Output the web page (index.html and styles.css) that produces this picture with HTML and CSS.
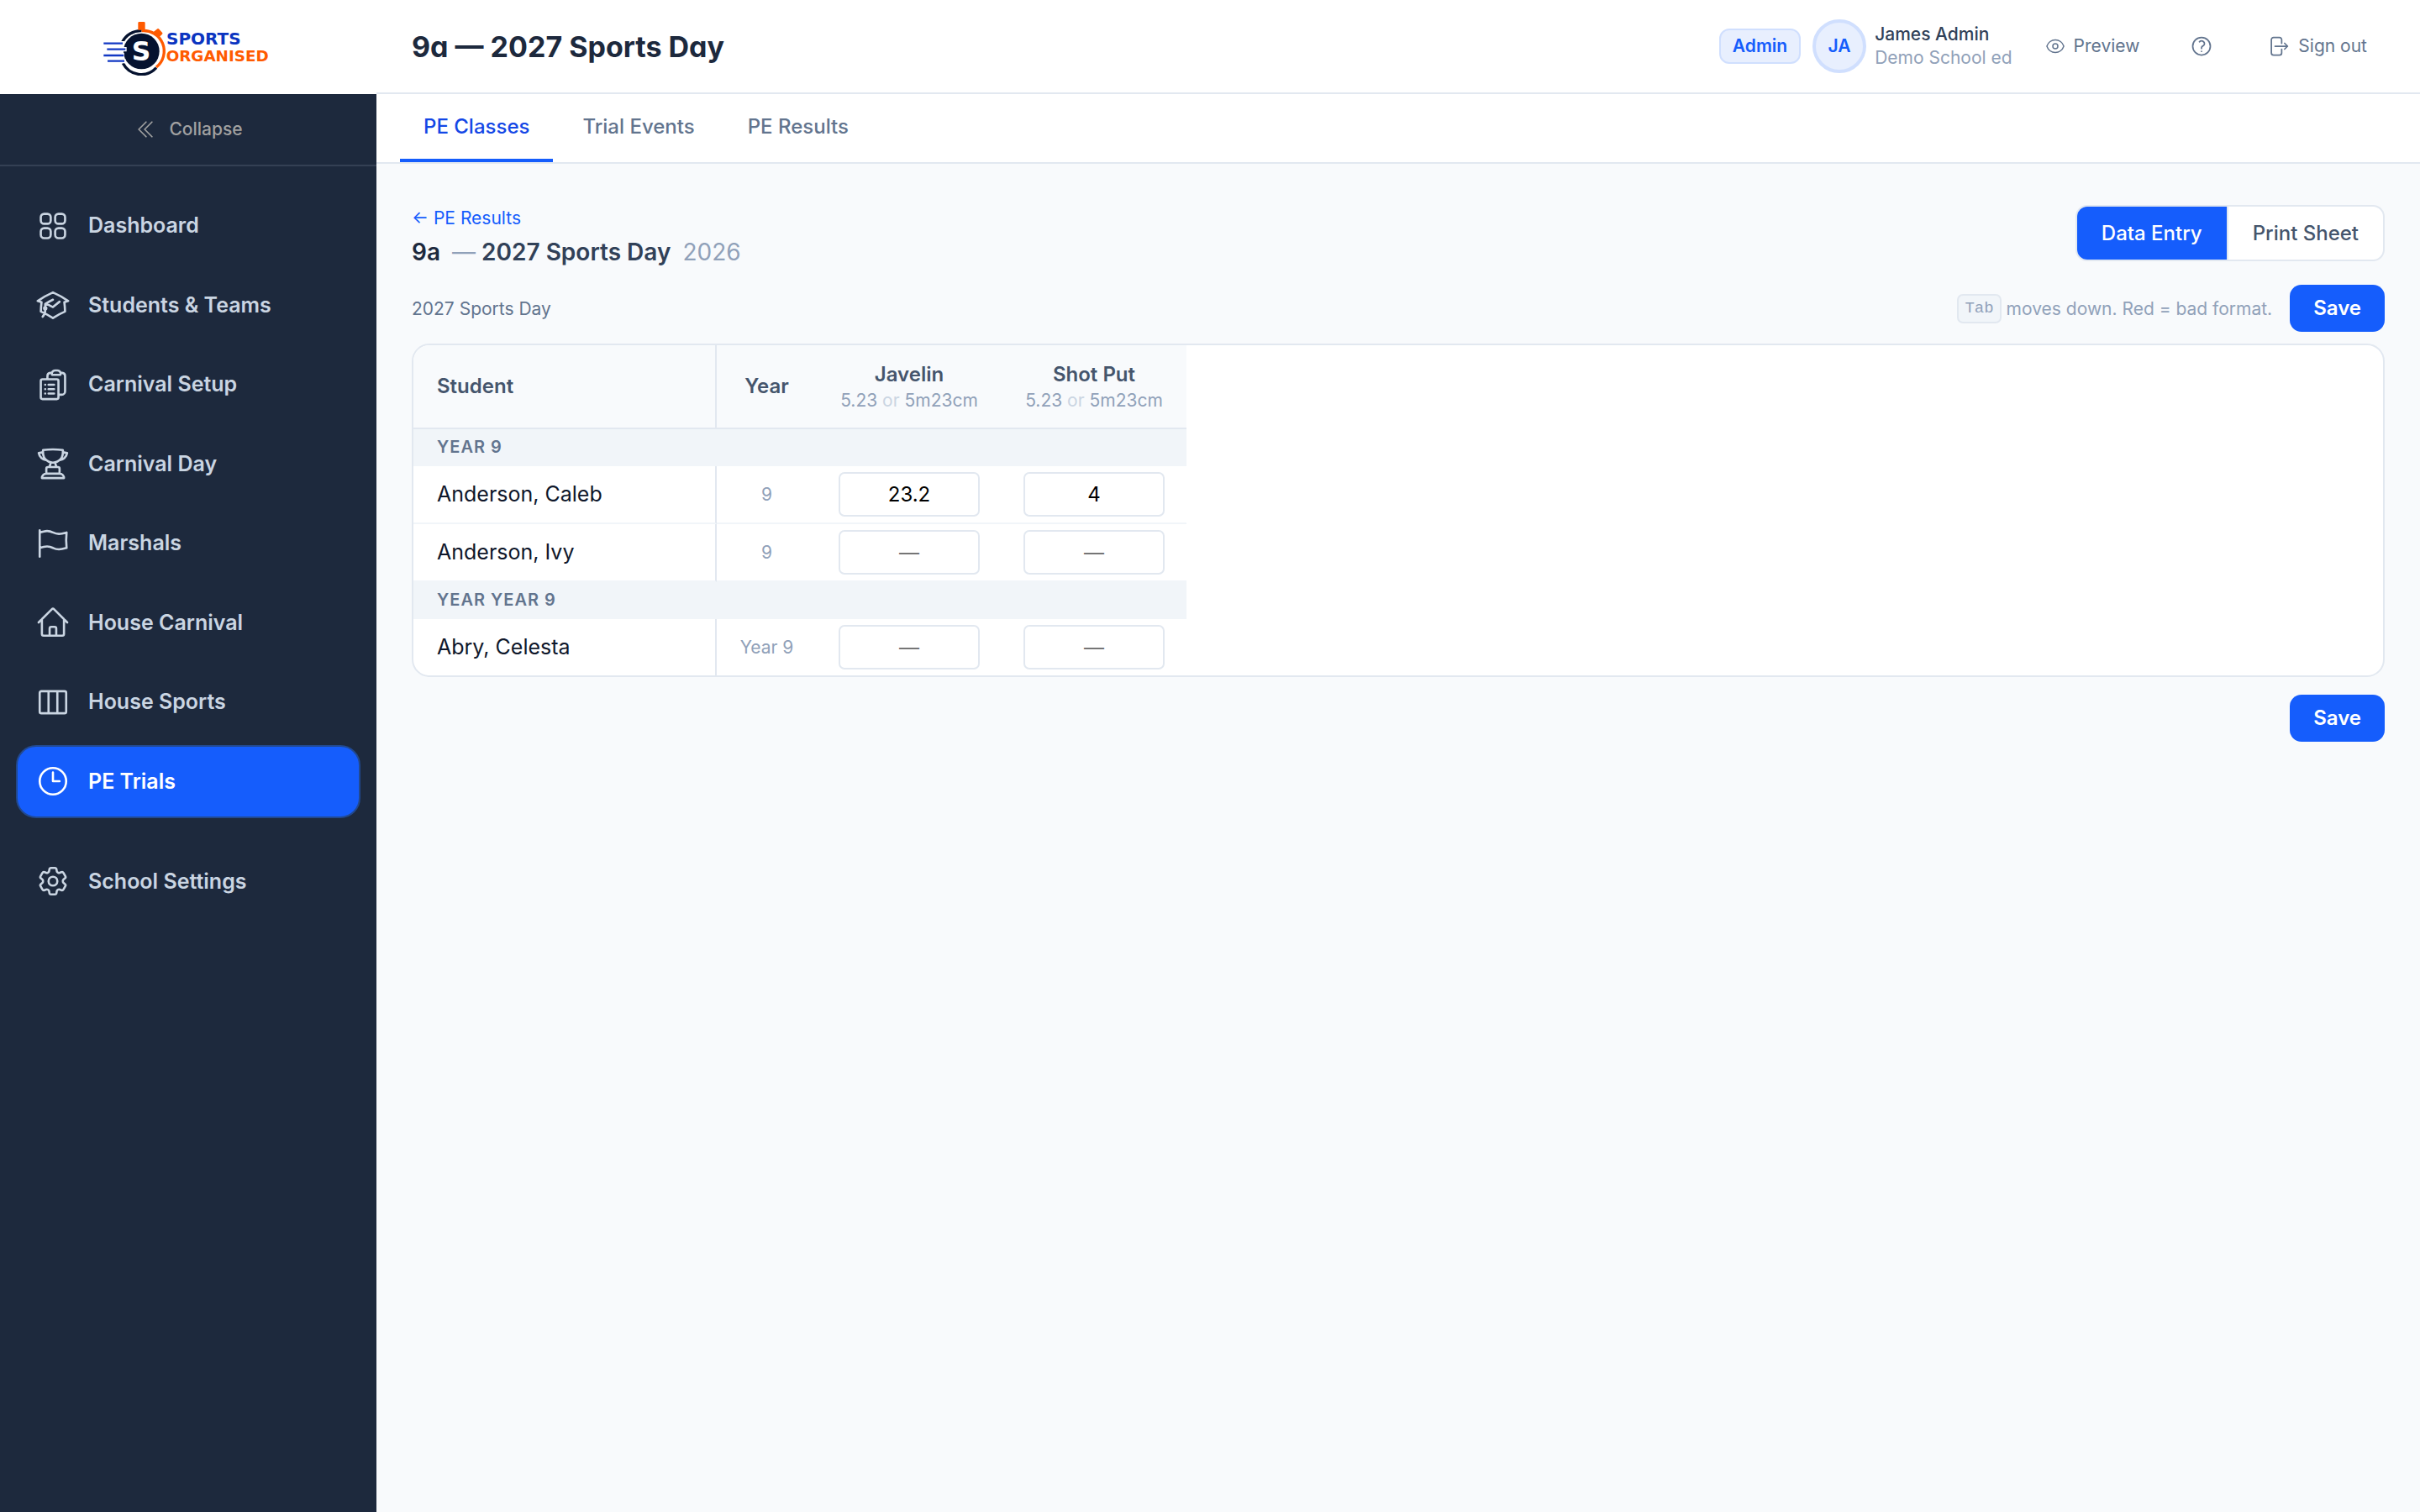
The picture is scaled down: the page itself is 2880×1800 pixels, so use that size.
FILE: index.html
```html
<!DOCTYPE html>
<html lang="en">
<head>
    <meta charset="UTF-8">
    <meta name="viewport" content="width=device-width, initial-scale=1.0">
    <title>9a — 2027 Sports Day</title>
    <link rel="stylesheet" href="styles.css">
</head>
<body>
    <aside class="sidebar">
        <a class="logo" href="#" aria-label="Sports Organised">
            <svg viewBox="66 36 612 204">
                <path d="M258 210A73 73 0 0 0 205 80" fill="none" stroke="#ff5a00" stroke-width="10"/>
                <path d="M205 80A73 73 0 0 0 137 120M139 196A73 73 0 0 0 258 212" fill="none" stroke="#05122f" stroke-width="10"/>
                <path d="M193 52q0-4 4-4h17q4 0 4 4v28l-13-3h-12z" fill="#ff5a00"/>
                <path d="M248 84l14-11q3-2 6 1l11 12q3 3 0 6l-10 10z" fill="#ff5a00"/>
                <circle cx="205" cy="153" r="64" fill="#05122f"/>
                <path d="M130 125h14M130 146h22M130 168h14M130 188h18" stroke="#fff" stroke-width="16"/>
                <path d="M70 125h68M82 146h66M70 168h72M84 188h60" stroke="#1238c4" stroke-width="7"/>
                <text x="170" y="187" class="logo-s">S</text>
                <text x="294" y="129" class="logo-top">SPORTS</text>
                <text x="293" y="189" class="logo-bottom">ORGANISED</text>
            </svg>
        </a>
        <button class="collapse" type="button">
            <svg class="icon" viewBox="0 0 24 24"><path d="m18.75 4.5-7.5 7.5 7.5 7.5m-6-15L5.25 12l7.5 7.5"/></svg>
            Collapse
        </button>
        <nav class="side-nav">
            <ul class="menu menu-main">
                <li><a href="#">
                    <svg class="icon" viewBox="0 0 24 24"><path d="M3.75 6A2.25 2.25 0 0 1 6 3.75h2.25A2.25 2.25 0 0 1 10.5 6v2.25a2.25 2.25 0 0 1-2.25 2.25H6a2.25 2.25 0 0 1-2.25-2.25V6ZM3.75 15.75A2.25 2.25 0 0 1 6 13.5h2.25a2.25 2.25 0 0 1 2.25 2.25V18a2.25 2.25 0 0 1-2.25 2.25H6A2.25 2.25 0 0 1 3.75 18v-2.25ZM13.5 6a2.25 2.25 0 0 1 2.25-2.25H18A2.25 2.25 0 0 1 20.25 6v2.25A2.25 2.25 0 0 1 18 10.5h-2.25a2.25 2.25 0 0 1-2.25-2.25V6ZM13.5 15.75a2.25 2.25 0 0 1 2.25-2.25H18a2.25 2.25 0 0 1 2.25 2.25V18A2.25 2.25 0 0 1 18 20.25h-2.25A2.25 2.25 0 0 1 13.5 18v-2.25Z"/></svg>
                    Dashboard
                </a></li>
                <li><a href="#">
                    <svg class="icon" viewBox="0 0 24 24"><path d="M4.26 10.147a60.438 60.438 0 0 0-.491 6.347A48.62 48.62 0 0 1 12 20.904a48.62 48.62 0 0 1 8.232-4.41 60.46 60.46 0 0 0-.491-6.347m-15.482 0a50.636 50.636 0 0 0-2.658-.813A59.906 59.906 0 0 1 12 3.493a59.903 59.903 0 0 1 10.399 5.84c-.896.248-1.783.52-2.658.814M7.5 11.25 12 13.489l4.5-3.7M6.75 15a.75.75 0 1 0 0-1.5.75.75 0 0 0 0 1.5Zm0 0v-3.675A55.378 55.378 0 0 1 12 8.443m-7.007 11.55A5.981 5.981 0 0 0 6.75 15.75v-1.5"/></svg>
                    Students &amp; Teams
                </a></li>
                <li><a href="#">
                    <svg class="icon" viewBox="0 0 24 24"><path d="M9 12h3.75M9 15h3.75M9 18h3.75m3 .75H18a2.25 2.25 0 0 0 2.25-2.25V6.108c0-1.135-.845-2.098-1.976-2.192a48.424 48.424 0 0 0-1.123-.08m-5.801 0c-.065.21-.1.433-.1.664 0 .414.336.75.75.75h4.5a.75.75 0 0 0 .75-.75 2.25 2.25 0 0 0-.1-.664m-5.8 0A2.251 2.251 0 0 1 13.5 2.25H15c1.012 0 1.867.668 2.15 1.586m-5.8 0c-.376.023-.75.05-1.124.08C9.095 4.01 8.25 4.973 8.25 6.108V8.25m0 0H4.875c-.621 0-1.125.504-1.125 1.125v11.25c0 .621.504 1.125 1.125 1.125h9.75c.621 0 1.125-.504 1.125-1.125V9.375c0-.621-.504-1.125-1.125-1.125H8.25ZM6.75 12h.008v.008H6.75V12Zm0 3h.008v.008H6.75V15Zm0 3h.008v.008H6.75V18Z"/></svg>
                    Carnival Setup
                </a></li>
                <li><a href="#">
                    <svg class="icon" viewBox="0 0 24 24"><path d="M16.5 18.75h-9m9 0a3 3 0 0 1 3 3h-15a3 3 0 0 1 3-3m9 0v-3.375c0-.621-.503-1.125-1.125-1.125h-.871M7.5 18.75v-3.375c0-.621.504-1.125 1.125-1.125h.872m5.007 0H9.497m5.007 0a7.454 7.454 0 0 1-.982-3.172M9.497 14.25a7.454 7.454 0 0 0 .981-3.172M5.25 4.236c-.982.143-1.954.317-2.916.52A6.003 6.003 0 0 0 7.73 9.728M5.25 4.236V4.5c0 2.108.966 3.99 2.48 5.228M5.25 4.236V2.721C7.456 2.41 9.71 2.25 12 2.25c2.291 0 4.545.16 6.75.47v1.516M7.73 9.728a6.726 6.726 0 0 0 2.748 1.35m8.272-6.842V4.5c0 2.108-.966 3.99-2.48 5.228m2.48-5.492a46.32 46.32 0 0 1 2.916.52 6.003 6.003 0 0 1-5.395 4.972m0 0a6.726 6.726 0 0 1-2.749 1.35m0 0a6.772 6.772 0 0 1-3.044 0"/></svg>
                    Carnival Day
                </a></li>
                <li><a href="#">
                    <svg class="icon" viewBox="0 0 24 24"><path d="M3 3v1.5M3 21v-6m0 0 2.77-.693a9 9 0 0 1 6.208.682l.108.054a9 9 0 0 0 6.086.71l3.114-.732a48.524 48.524 0 0 1-.005-10.499l-3.11.732a9 9 0 0 1-6.085-.711l-.108-.054a9 9 0 0 0-6.208-.682L3 4.5M3 15V4.5"/></svg>
                    Marshals
                </a></li>
                <li><a href="#">
                    <svg class="icon" viewBox="0 0 24 24"><path d="m2.25 12 8.954-8.955c.44-.439 1.152-.439 1.591 0L21.75 12M4.5 9.75v10.125c0 .621.504 1.125 1.125 1.125H9.75v-4.875c0-.621.504-1.125 1.125-1.125h2.25c.621 0 1.125.504 1.125 1.125V21h4.125c.621 0 1.125-.504 1.125-1.125V9.75M8.25 21h8.25"/></svg>
                    House Carnival
                </a></li>
                <li><a href="#">
                    <svg class="icon" viewBox="0 0 24 24"><path d="M9 4.5v15m6-15v15m-10.875 0h15.75c.621 0 1.125-.504 1.125-1.125V5.625c0-.621-.504-1.125-1.125-1.125H4.125C3.504 4.5 3 5.004 3 5.625v12.75c0 .621.504 1.125 1.125 1.125Z"/></svg>
                    House Sports
                </a></li>
                <li><a class="active" href="#" aria-current="page">
                    <svg class="icon" viewBox="0 0 24 24"><path d="M12 6v6h4.5m4.5 0a9 9 0 1 1-18 0 9 9 0 0 1 18 0Z"/></svg>
                    PE Trials
                </a></li>
            </ul>
            <ul class="menu">
                <li><a href="#">
                    <svg class="icon" viewBox="0 0 24 24"><path d="M9.594 3.94c.09-.542.56-.94 1.11-.94h2.593c.55 0 1.02.398 1.11.94l.213 1.281c.063.374.313.686.645.87.074.04.147.083.22.127.325.196.72.257 1.075.124l1.217-.456a1.125 1.125 0 0 1 1.37.49l1.296 2.247a1.125 1.125 0 0 1-.26 1.431l-1.003.827c-.293.241-.438.613-.43.992a7.723 7.723 0 0 1 0 .255c-.008.378.137.75.43.991l1.004.827c.424.35.534.955.26 1.43l-1.298 2.247a1.125 1.125 0 0 1-1.369.491l-1.217-.456c-.355-.133-.75-.072-1.076.124a6.47 6.47 0 0 1-.22.128c-.331.183-.581.495-.644.869l-.213 1.281c-.09.543-.56.94-1.11.94h-2.594c-.55 0-1.019-.398-1.11-.94l-.213-1.281c-.062-.374-.312-.686-.644-.87a6.52 6.52 0 0 1-.22-.127c-.325-.196-.72-.257-1.076-.124l-1.217.456a1.125 1.125 0 0 1-1.369-.49l-1.297-2.247a1.125 1.125 0 0 1 .26-1.431l1.004-.827c.292-.24.437-.613.43-.991a6.932 6.932 0 0 1 0-.255c.007-.38-.138-.751-.43-.992l-1.004-.827a1.125 1.125 0 0 1-.26-1.43l1.297-2.247a1.125 1.125 0 0 1 1.37-.491l1.216.456c.356.133.751.072 1.076-.124.072-.044.146-.086.22-.128.332-.183.582-.495.644-.869l.214-1.28Z"/><path d="M15 12a3 3 0 1 1-6 0 3 3 0 0 1 6 0Z"/></svg>
                    School Settings
                </a></li>
            </ul>
        </nav>
    </aside>

    <div class="page">
        <header class="topbar">
            <h1>9a — 2027 Sports Day</h1>
            <div class="account">
                <div class="user">
                    <span class="badge">Admin</span>
                    <span class="avatar">JA</span>
                    <div class="user-text">
                        <div class="user-name">James Admin</div>
                        <div class="user-school">Demo School ed</div>
                    </div>
                </div>
                <button class="top-btn preview" type="button">
                    <svg class="icon" viewBox="0 0 24 24"><path d="M2.036 12.322a1.012 1.012 0 0 1 0-.639C3.423 7.51 7.36 4.5 12 4.5c4.638 0 8.573 3.007 9.963 7.178.07.207.07.431 0 .639C20.577 16.49 16.64 19.5 12 19.5c-4.638 0-8.573-3.007-9.963-7.178Z"/><path d="M15 12a3 3 0 1 1-6 0 3 3 0 0 1 6 0Z"/></svg>
                    Preview
                </button>
                <button class="top-btn" type="button" aria-label="Help">
                    <svg class="icon" viewBox="0 0 24 24"><path d="M9.879 7.519c1.171-1.025 3.071-1.025 4.242 0 1.172 1.025 1.172 2.687 0 3.712-.203.179-.43.326-.67.442-.745.361-1.45.999-1.45 1.827v.75M21 12a9 9 0 1 1-18 0 9 9 0 0 1 18 0Zm-9 5.25h.008v.008H12v-.008Z"/></svg>
                </button>
                <button class="top-btn" type="button">
                    <svg class="icon" viewBox="0 0 24 24"><path d="M15.75 9V5.25A2.25 2.25 0 0 0 13.5 3h-6a2.25 2.25 0 0 0-2.25 2.25v13.5A2.25 2.25 0 0 0 7.5 21h6a2.25 2.25 0 0 0 2.25-2.25V15m3 0 3-3m0 0-3-3m3 3H9"/></svg>
                    Sign out
                </button>
            </div>
        </header>

        <nav class="tabs">
            <a class="active" href="#" aria-current="page">PE Classes</a>
            <a href="#">Trial Events</a>
            <a href="#">PE Results</a>
        </nav>

        <main>
            <div class="heading">
                <div>
                    <a class="back" href="#">← PE Results</a>
                    <h2>9a <span class="event"><span class="dash">—</span> 2027 Sports Day</span> <span class="season">2026</span></h2>
                </div>
                <div class="view-toggle">
                    <button class="active" type="button">Data Entry</button>
                    <button type="button">Print Sheet</button>
                </div>
            </div>

            <form>
                <div class="toolbar">
                    <span class="carnival">2027 Sports Day</span>
                    <span class="hint"><kbd>Tab</kbd> moves down. Red = bad format.</span>
                    <button class="save" type="submit">Save</button>
                </div>

                <div class="card">
                    <table>
                        <thead>
                            <tr>
                                <th class="student">Student</th>
                                <th class="year">Year</th>
                                <th class="result">Javelin<small>5.23 <i>or</i> 5m23cm</small></th>
                                <th class="result">Shot Put<small>5.23 <i>or</i> 5m23cm</small></th>
                            </tr>
                        </thead>
                        <tbody>
                            <tr class="group"><td colspan="4">YEAR 9</td></tr>
                            <tr>
                                <td class="student">Anderson, Caleb</td>
                                <td class="year">9</td>
                                <td class="result"><input type="text" value="23.2" placeholder="—" aria-label="Javelin, Anderson, Caleb"></td>
                                <td class="result"><input type="text" value="4" placeholder="—" aria-label="Shot Put, Anderson, Caleb"></td>
                            </tr>
                            <tr>
                                <td class="student">Anderson, Ivy</td>
                                <td class="year">9</td>
                                <td class="result"><input type="text" placeholder="—" aria-label="Javelin, Anderson, Ivy"></td>
                                <td class="result"><input type="text" placeholder="—" aria-label="Shot Put, Anderson, Ivy"></td>
                            </tr>
                            <tr class="group"><td colspan="4">YEAR YEAR 9</td></tr>
                            <tr>
                                <td class="student">Abry, Celesta</td>
                                <td class="year">Year 9</td>
                                <td class="result"><input type="text" placeholder="—" aria-label="Javelin, Abry, Celesta"></td>
                                <td class="result"><input type="text" placeholder="—" aria-label="Shot Put, Abry, Celesta"></td>
                            </tr>
                        </tbody>
                    </table>
                </div>

                <div class="form-footer">
                    <button class="save" type="submit">Save</button>
                </div>
            </form>
        </main>
    </div>
</body>
</html>
```
FILE: styles.css
```css
* {
    box-sizing: border-box;
}
body {
    display: flex;
    min-height: 100vh;
    margin: 0;
    background-color: #f8fafc;
    color: #1d293d;
    font-family: Inter, "Liberation Sans", sans-serif;
    font-size: 24px;
    line-height: 35px;
}
a {
    color: inherit;
    text-decoration: none;
}
button {
    padding: 0;
    border: none;
    background: none;
    color: inherit;
    font: inherit;
    cursor: pointer;
}
.icon {
    flex: none;
    width: 28px;
    height: 28px;
    fill: none;
    stroke: currentColor;
    stroke-width: 1.5;
    stroke-linecap: round;
    stroke-linejoin: round;
}

/* Sidebar */
.sidebar {
    flex: none;
    width: 448px;
    background-color: #1d293d;
    color: #cad5e2;
}
.logo {
    display: flex;
    align-items: center;
    justify-content: center;
    height: 112px;
    background-color: white;
}
.logo svg {
    width: 204px;
    height: 68px;
}
.logo text {
    font-family: "DejaVu Sans", sans-serif;
    font-weight: bold;
}
.logo-s {
    fill: white;
    font-size: 94px;
}
.logo-top {
    fill: #0b35c1;
    font-size: 60px;
}
.logo-bottom {
    fill: #ff5a00;
    font-size: 55px;
}
.collapse {
    display: flex;
    align-items: center;
    justify-content: center;
    gap: 14px;
    width: 100%;
    padding: 28px;
    border-bottom: 2px solid #344054;
    color: #a1a1a1;
    font-size: 21px;
    font-weight: 500;
    line-height: 28px;
}
.side-nav {
    display: grid;
    gap: 32px;
    padding: 27px 19px;
}
.menu {
    display: grid;
    grid-auto-rows: 1fr;
    gap: 7px;
    margin: 0;
    padding: 0;
    list-style: none;
}
.menu-main {
    min-height: 749px;
}
.menu a {
    display: flex;
    align-items: center;
    gap: 21px;
    height: 100%;
    padding: 20px 21px;
    border: 2px solid transparent;
    border-radius: 24px;
    font-size: 25px;
    font-weight: 600;
}
.menu .icon {
    width: 42px;
    height: 42px;
}
.menu a.active {
    background-color: #155dfc;
    border-color: #22498f;
    color: white;
}

/* Top bar */
.page {
    flex: 1;
    min-width: 0;
}
.topbar {
    display: flex;
    align-items: center;
    justify-content: space-between;
    height: 112px;
    padding: 0 42px;
    border-bottom: 2px solid #e2e8f0;
    background-color: white;
}
h1 {
    margin: 0;
    font-size: 34px;
    font-weight: 700;
    font-feature-settings: "cv11";
}
.account {
    display: flex;
    align-items: center;
    gap: 21px;
    color: #62748e;
    font-size: 21px;
    line-height: 28px;
}
.user {
    display: flex;
    align-items: center;
}
.badge {
    padding: 5px 14px;
    border: 2px solid #d0dffe;
    border-radius: 12px;
    background-color: #e8effe;
    color: #155dfc;
    font-weight: 600;
}
.avatar {
    display: flex;
    align-items: center;
    justify-content: center;
    width: 64px;
    height: 64px;
    margin: 0 10px 0 14px;
    border: 4px solid #d0dffe;
    border-radius: 50%;
    background-color: #e8effe;
    color: #155dfc;
    font-weight: 600;
}
.user-name {
    color: #314158;
    font-weight: 500;
}
.user-school {
    color: #90a1b9;
}
.top-btn {
    display: flex;
    align-items: center;
    gap: 10px;
    padding: 14px 21px;
}
.preview {
    padding: 14px 18px;
}
.preview .icon {
    width: 24px;
    height: 24px;
}

/* Tabs */
.tabs {
    display: flex;
    gap: 7px;
    padding: 0 28px;
    border-bottom: 2px solid #e2e8f0;
    background-color: white;
    color: #62748e;
    font-weight: 500;
}
.tabs a {
    padding: 21px 28px;
    border-bottom: 4px solid transparent;
}
.tabs a.active {
    border-color: #155dfc;
    color: #1447e6;
}

/* Class heading */
main {
    padding: 49px 42px;
}
.heading {
    display: flex;
    align-items: flex-start;
    justify-content: space-between;
    margin-bottom: 18px;
}
.back {
    display: block;
    color: #155dfc;
    font-size: 21px;
    line-height: 32px;
}
h2 {
    margin: 3px 0 0;
    font-size: 28px;
    font-weight: 600;
    line-height: 42px;
}
.event {
    margin-left: 7px;
    color: #314158;
}
.dash,
.season {
    color: #90a1b9;
    font-weight: 400;
}
.season {
    margin-left: 7px;
}
.view-toggle {
    display: flex;
    overflow: hidden;
    border: 2px solid #e2e8f0;
    border-radius: 14px;
    background-color: white;
    color: #45556c;
}
.view-toggle button {
    padding: 14px 29px;
    font-weight: 500;
}
.view-toggle button + button {
    border-left: 2px solid #e2e8f0;
}
.view-toggle .active {
    background-color: #155dfc;
    color: white;
}

/* Results form */
.toolbar {
    display: flex;
    align-items: center;
    gap: 21px;
    margin-bottom: 14px;
    color: #90a1b9;
    font-size: 21px;
}
.carnival {
    margin-right: auto;
    color: #62748e;
}
.hint {
    display: flex;
    align-items: center;
    gap: 6px;
}
kbd {
    padding: 0 7px;
    border: 2px solid #e2e8f0;
    border-radius: 7px;
    background-color: #f1f5f9;
    font-family: "Liberation Mono", monospace;
    font-size: 19px;
    line-height: 31px;
}
.save {
    padding: 10px 28px 11px;
    border-radius: 14px;
    background-color: #155dfc;
    color: white;
    font-size: 24px;
    font-weight: 600;
}
.card {
    overflow: hidden;
    border: 2px solid #e2e8f0;
    border-radius: 21px;
    background-color: white;
}
table {
    border-spacing: 0;
}
th {
    padding: 17px 28px 18px;
    border-bottom: 2px solid #e2e8f0;
    background-color: #f8fafc;
    color: #45556c;
    font-weight: 600;
}
th small {
    display: block;
    color: #90a1b9;
    font-size: 21px;
    font-weight: 400;
    line-height: 28px;
}
th i {
    color: #cad5e2;
    font-style: normal;
}
td {
    padding: 7px 26px;
    border-bottom: 2px solid #f1f5f9;
}
tr:last-child td {
    border-bottom: none;
}
.student {
    min-width: 361px;
    padding-left: 28px;
    border-right: 2px solid #e2e8f0;
    text-align: left;
}
td.student {
    color: #0f172b;
    font-size: 25px;
}
.year {
    min-width: 119px;
    padding-right: 0;
    padding-left: 0;
    text-align: center;
}
td.year {
    color: #90a1b9;
    font-size: 21px;
}
.result {
    min-width: 220px;
    padding-right: 26px;
    padding-left: 26px;
    text-align: center;
}
.group td {
    padding: 6px 28px 8px;
    border: none;
    background-color: #f1f5f9;
    color: #62748e;
    font-size: 20px;
    font-weight: 600;
    line-height: 30px;
    letter-spacing: 1px;
}
td input {
    display: block;
    width: 168px;
    height: 53px;
    padding: 0 14px;
    border: 2px solid #e2e8f0;
    border-radius: 7px;
    background-color: white;
    color: black;
    font: inherit;
    text-align: center;
}
td input::placeholder {
    color: #757575;
}
.form-footer {
    display: flex;
    justify-content: flex-end;
    margin-top: 21px;
}
```
